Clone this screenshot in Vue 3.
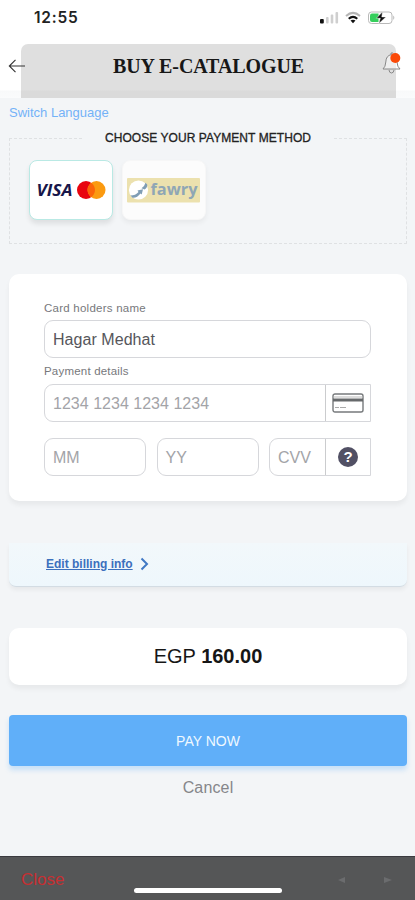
<script setup>
import { ref } from 'vue'

const holder = ref('Hagar Medhat')
</script>

<template>
  <div class="screen">
    <header class="top">
      <div class="status">
        <span class="time">12:55</span>
        <svg class="indicators" width="78" height="16" viewBox="0 0 78 16">
          <rect x="0" y="9" width="3.800" height="4.500" rx="1" fill="#111" />
          <g fill="#cfcfcf">
            <rect x="6" y="7" width="2.600" height="6.500" rx="1" />
            <rect x="10.700" y="4.500" width="2.600" height="9" rx="1" />
            <rect x="15.500" y="2" width="2.600" height="11.500" rx="1" />
          </g>
          <g fill="none" stroke-width="2">
            <path d="M26 6Q33 -.3 40 6" stroke="#b5b5b5" />
            <path d="M28.700 8.700Q33 5.100 37.300 8.700" stroke="#111" />
          </g>
          <path d="M30.500 10.600Q33 8.900 35.500 10.600L33 13.300Z" fill="#111" />
          <rect x="48.500" y="2" width="23.500" height="11.500" rx="3" fill="#fff" stroke="#b9b9b9" />
          <path d="M52 3.500h6.500v8.500H52q-2 0-2-2V5.500q0-2 2-2Z" fill="#35cf5c" />
          <path d="M73.300 5.600q2 2.200 0 4.400Z" fill="#b0b0b0" />
          <path d="M62.500 1.800L56.300 8.300h4l-1.500 5.300L66 6.900h-4.200Z" fill="#111" stroke="#fff" stroke-width=".5" />
        </svg>
      </div>
      <div class="nav">
        <svg class="back" width="18" height="16" viewBox="0 0 18 16">
          <path d="M17 8H1.500M7.500 1.800L1.300 8l6.200 6.200" fill="none" stroke="#333" stroke-width="1.100" />
        </svg>
        <h1 class="title"><span>BUY E-CATALOGUE</span></h1>
        <svg class="bell" width="22" height="24" viewBox="0 0 22 24">
          <path d="M2 18H19Q16.300 16 16 11Q15.700 4.500 10.500 3.600Q5 4.500 4.800 11Q4.500 16 2 18Z" fill="#fff" fill-opacity=".5" stroke="#888" stroke-width="1" />
          <path d="M8 19q.3 3 2.500 3t2.500-3M10 3.500V2h2" fill="none" stroke="#888" stroke-width="1" />
          <circle cx="14.300" cy="7" r="5" fill="#fb4a08" />
        </svg>
      </div>
    </header>

    <main class="page">
      <a class="lang"><span>Switch Language</span></a>

      <fieldset class="methods">
        <legend><span>CHOOSE YOUR PAYMENT METHOD</span></legend>
        <div class="tiles">
          <div class="tile active">
            <svg width="82" height="57" viewBox="0 0 82 57">
              <text class="visa" x="6.500" y="35" textLength="36" lengthAdjust="spacingAndGlyphs">VISA</text>
              <circle cx="56" cy="29" r="9" fill="#e8050f" />
              <circle cx="66.500" cy="29" r="9" fill="#fb9a10" />
              <path d="M61.250 21.700a9 9 0 0 1 0 14.600a9 9 0 0 1 0-14.600Z" fill="#fb6409" />
            </svg>
          </div>
          <div class="tile">
            <svg width="82" height="57" viewBox="0 0 82 57">
              <rect x="4" y="17" width="73" height="24.500" rx="1" fill="#ece1ae" />
              <circle cx="15.500" cy="29" r="9.600" fill="#fff" />
              <path d="M7.500 34.500Q12.500 34.500 15.500 31l-1-1.500 5.500-1.300-1.300 5.300-1.200-.9Q14 37.300 9.500 36.800ZM18.500 27.200q3-1.700 4-5.500l1.700 1.800q.5 3-2.700 5Z" fill="#7f9db5" />
              <text class="fawry" x="27.500" y="33.500" textLength="47" lengthAdjust="spacingAndGlyphs">fawry</text>
            </svg>
          </div>
        </div>
      </fieldset>

      <section class="panel form">
        <label class="caption name-caption">Card holders name</label>
        <div class="field filled">{{ holder }}</div>
        <label class="caption pay-caption">Payment details</label>
        <div class="field squared">
          <span class="value number">1234 1234 1234 1234</span>
          <span class="addon">
            <svg width="32" height="20" viewBox="0 0 32 20">
              <rect x="1" y="1" width="30" height="18" rx="2" fill="#fff" stroke="#777a7c" stroke-width="1.400" />
              <path d="M1 7h30" stroke="#66696b" stroke-width="3" />
              <path d="M1.500 4h29" stroke="#bbb" />
              <path d="M3 14.500h4M8 14.500h6" stroke="#aaa" />
            </svg>
          </span>
        </div>
        <div class="row">
          <div class="field"><span class="value">MM</span></div>
          <div class="field"><span class="value">YY</span></div>
          <div class="field squared">
            <span class="value">CVV</span>
            <span class="addon"><b class="help">?</b></span>
          </div>
        </div>
      </section>

      <section class="billing">
        <a>Edit billing info</a>
        <svg width="9" height="14" viewBox="0 0 9 14">
          <path d="M1.500 1.500L7 7l-5.500 5.500" fill="none" stroke="#4079c4" stroke-width="2" />
        </svg>
      </section>

      <section class="panel amount"><span>EGP <b>160.00</b></span></section>
      <button class="pay"><span>PAY NOW</span></button>
      <a class="cancel">Cancel</a>
    </main>

    <footer class="bar">
      <span class="close">Close</span>
      <i class="home"></i>
      <svg class="arrows" width="60" height="10" viewBox="0 0 60 10">
        <path d="M1 5l7-3v6ZM55 5l-8-3v6Z" fill="#6b6c6e" />
      </svg>
    </footer>
  </div>
</template>

<style>
body {
  margin: 0;
  background: #f3f5f7;
}
</style>

<style scoped>
* {
  box-sizing: border-box;
}
.screen {
  width: 415px;
  height: 900px;
  display: flex;
  flex-direction: column;
  overflow: hidden;
  background: #f3f5f7;
  font-family: "Liberation Sans", Arial, sans-serif;
}
.top {
  height: 98px;
  background: linear-gradient(#fff 0, #fff 90px, #f8f9fa 91px, #fafbfc 98px);
}
.status {
  height: 44px;
  padding: 10px 17px 0 34px;
  display: flex;
  justify-content: space-between;
}
.time {
  font: 600 15.5px/16px Inter, sans-serif;
  letter-spacing: 0.8px;
  color: #222;
}
.nav {
  height: 54px;
  display: grid;
  grid-template-columns: 21px 375px 19px;
}
.back {
  z-index: 1;
  margin: 14px 0 0 8px;
}
.title {
  margin: 0;
  border-radius: 7px 7px 0 0;
  background: linear-gradient(#dfdfdf 46px, #dadada 47px);
  font: bold 20px/44px "Liberation Serif", serif;
  letter-spacing: -0.08px;
  text-align: center;
  color: #171717;
}
.bell {
  margin: 7px 0 0 -15px;
}
.page {
  height: 758px;
  padding: 0 8px 0 9px;
  display: flex;
  flex-direction: column;
}
.lang {
  height: 33px;
  font-size: 13px;
  line-height: 30px;
  color: #73b2f7;
}
.methods {
  height: 113px;
  margin: 0;
  padding: 0;
  border: 1px dashed #dfe1e3;
}
.methods legend {
  width: 248px;
  height: 14px;
  margin: 0 auto;
  padding: 0;
  text-align: center;
  font-size: 12px;
  line-height: 14px;
  letter-spacing: 0.06px;
  white-space: nowrap;
  color: #222;
  -webkit-text-stroke: 0.3px #222;
}
.tiles {
  display: flex;
  gap: 9px;
  margin-top: 15px;
  margin-left: 19px;
}
.tile {
  width: 84px;
  height: 60px;
  border: 1px solid #f7f7f7;
  border-radius: 8px;
  background: #fcfcfc;
  box-shadow: 0 3px 5px #0000000d;
}
.tile.active {
  border-color: #b9e9e4;
  background: #fff;
  box-shadow: 0 4px 5px #00000016;
}
.tile svg {
  display: block;
}
.visa {
  font: italic bold 16.5px "Open Sans", sans-serif;
  fill: #17164a;
}
.fawry {
  font: bold 16.5px "Open Sans", sans-serif;
  fill: #8fa6b5;
}
.panel {
  border-radius: 10px;
  background: #fff;
  box-shadow: 0 4px 5px #0000000d;
}
.form {
  height: 227px;
  margin-top: 30px;
  padding: 28px 36px 0 35px;
}
.caption {
  display: block;
  font-size: 11.5px;
  color: #77787c;
}
.name-caption {
  height: 18px;
  line-height: 13px;
  letter-spacing: 0.24px;
}
.pay-caption {
  height: 26px;
  line-height: 27px;
  letter-spacing: 0.2px;
}
.field {
  height: 38px;
  padding-left: 8px;
  display: flex;
  align-items: center;
  border: 1px solid #d6d7db;
  border-radius: 9px;
  font-size: 16px;
  color: #a3a4a8;
}
.field.filled {
  padding-top: 2px;
  color: #56565b;
  letter-spacing: 0.05px;
}
.field.squared {
  border-radius: 9px 0 0 9px;
}
.value {
  flex: 1;
  padding-top: 2px;
}
.number {
  letter-spacing: 0.02px;
}
.addon {
  width: 45px;
  height: 100%;
  display: flex;
  align-items: center;
  justify-content: center;
  border-left: 1px solid #cbccce;
}
.row {
  margin-top: 16px;
  display: grid;
  grid-template-columns: 102px 102px 102px;
  justify-content: space-between;
}
.help {
  width: 20px;
  height: 20px;
  border-radius: 50%;
  background: #515064;
  color: #fff;
  font-size: 15px;
  line-height: 20px;
  text-align: center;
}
.billing {
  height: 44px;
  margin-top: 42px;
  padding: 0 0 2px 37px;
  display: flex;
  align-items: center;
  gap: 7px;
  border-bottom: 1px solid #d3dce3;
  border-radius: 0 0 7px 7px;
  background: linear-gradient(#f2f8fb, #eef7fc);
  box-shadow: 0 3px 4px #0000000d;
}
.billing a {
  font-size: 12px;
  font-weight: bold;
  text-decoration: underline;
  color: #3c70bd;
}
.amount {
  height: 57px;
  margin-top: 41px;
  font-size: 20px;
  line-height: 57px;
  text-align: center;
  color: #161616;
}
.pay {
  height: 51px;
  margin-top: 30px;
  padding: 0;
  border: 0;
  border-radius: 4px;
  background: #60aff9;
  box-shadow: 0 4px 5px #60aff94d;
  color: #eff8ff;
  font: 14px "Liberation Sans", sans-serif;
}
.cancel {
  margin-top: 11px;
  font-size: 16px;
  line-height: 22px;
  letter-spacing: 0.15px;
  text-align: center;
  color: #85868a;
}
.bar {
  height: 44px;
  display: grid;
  grid-template-columns: 134px 148px 1fr;
  border-top: 1px solid #3a3a3f;
  background: #555657;
}
.close {
  padding-left: 21px;
  font-size: 17px;
  line-height: 45px;
  color: #c62f32;
}
.home {
  height: 5px;
  margin-top: 31px;
  border-radius: 3px;
  background: #fff;
}
.arrows {
  margin: 18px 0 0 55px;
}
</style>
